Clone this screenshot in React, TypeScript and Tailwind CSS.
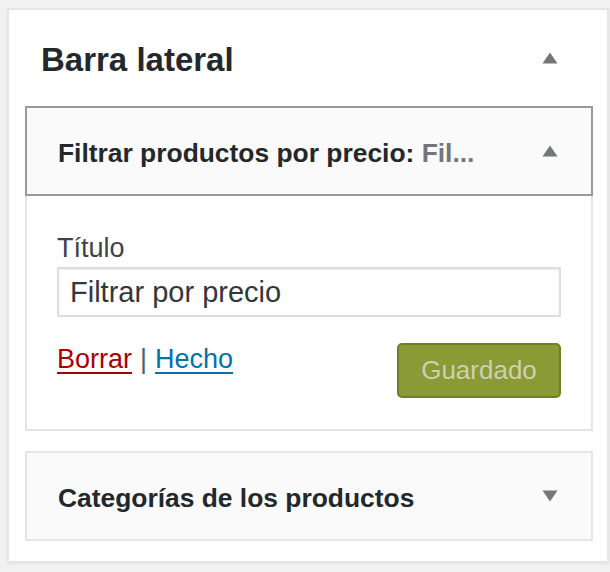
import React from "react"

function Arrow({ down = false }: { down?: boolean }) {
  return (
    <svg width="16" height="12" viewBox="0 0 16 12" className="shrink-0">
      {down ? (
        <polygon points="0.5,0.5 15.5,0.5 8,11.5" fill="#72777c" />
      ) : (
        <polygon points="8,0.5 15.5,11.5 0.5,11.5" fill="#72777c" />
      )}
    </svg>
  )
}

export default function App() {
  return (
    <div
      className="min-h-[572px] bg-[#f1f1f1] pl-[7px] pt-[8px]"
      style={{ fontFamily: '"Liberation Sans", Arial, sans-serif' }}
    >
      <div className="w-[602px] border-2 border-[#e5e5e5] bg-white pb-[20px] shadow-[0_1px_2px_rgba(0,0,0,0.06)]">
        {/* panel heading */}
        <div className="flex items-start justify-between pl-[32px] pr-[49px] pt-[30px] pb-[26px]">
          <h2 className="text-[33px] font-bold leading-[40px] text-[#23282d]">Barra lateral</h2>
          <div className="mt-[12px]">
            <Arrow />
          </div>
        </div>

        {/* expanded widget */}
        <div className="ml-[16px] w-[568px]">
          <div className="flex h-[90px] items-center justify-between border-2 border-[#999] bg-[#fafafa] pl-[31px] pr-[33px]">
            <h3 className="pt-[3px] text-[26.4px] font-bold leading-[36px] text-[#23282d]">
              Filtrar productos por precio:<span className="text-[#72777c]"> Fil...</span>
            </h3>
            <Arrow />
          </div>
          <div className="border-2 border-t-0 border-[#e5e5e5] px-[30px] pt-[34px] pb-[31px]">
            <label className="block text-[27px] leading-[36px] text-[#3c434a]">Título</label>
            <input
              readOnly
              value="Filtrar por precio"
              className="mt-[1px] block h-[50px] w-[504px] border-2 border-[#ddd] bg-white pl-[11px] text-[29px] text-[#32373c] shadow-[inset_0_1px_2px_rgba(0,0,0,0.07)] outline-none"
            />
            <div className="mt-[24px] flex items-start justify-between">
              <div className="text-[27px] leading-[36px] text-[#555d66]">
                <a className="text-[#a00] underline decoration-2 underline-offset-[4px]">Borrar</a>
                <span className="mx-[8px]">|</span>
                <a className="text-[#0073aa] underline decoration-2 underline-offset-[4px]">Hecho</a>
              </div>
              <button className="mt-[2px] h-[55px] w-[164px] rounded-[5px] border-2 border-[#6f7f22] bg-[#8a9a34] text-[26px] text-[#cbd1b2]">
                Guardado
              </button>
            </div>
          </div>
        </div>

        {/* collapsed widget */}
        <div className="ml-[16px] mt-[20px] flex h-[90px] w-[568px] items-center justify-between border-2 border-[#e5e5e5] bg-[#fafafa] pl-[31px] pr-[33px]">
          <h3 className="pt-[3px] text-[26.4px] font-bold leading-[36px] text-[#23282d]">
            Categorías de los productos
          </h3>
          <Arrow down />
        </div>
      </div>
    </div>
  )
}
